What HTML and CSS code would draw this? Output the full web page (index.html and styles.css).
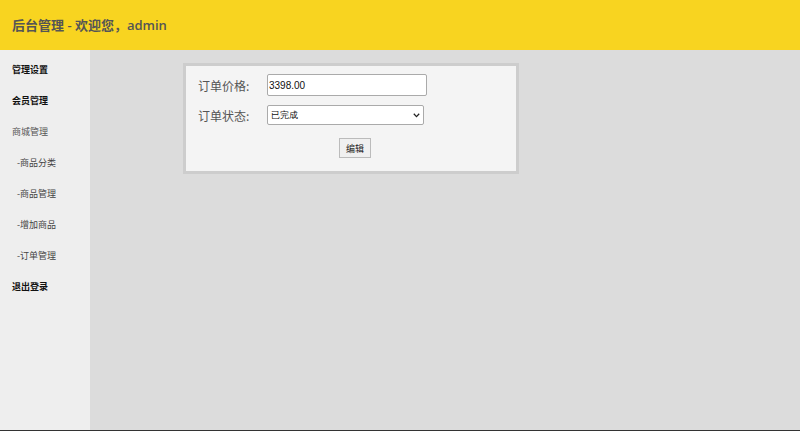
FILE: index.html
```html
<!DOCTYPE html>
<html lang="zh">
<head>
<meta charset="utf-8">
<link rel="stylesheet" href="styles.css">
</head>
<body>
<div class="page">
  <header class="top">后台管理 - 欢迎您，admin</header>
  <div class="body">
    <nav class="side">
      <a class="item bold">管理设置</a>
      <a class="item bold">会员管理</a>
      <a class="item grey">商城管理</a>
      <a class="item sub">-商品分类</a>
      <a class="item sub">-商品管理</a>
      <a class="item sub">-增加商品</a>
      <a class="item sub">-订单管理</a>
      <a class="item bold">退出登录</a>
    </nav>
    <main class="main">
      <form class="card">
        <div class="row">
          <label class="lbl">订单价格:</label>
          <input class="inp" type="text" value="3398.00">
        </div>
        <div class="row">
          <label class="lbl">订单状态:</label>
          <div class="selwrap">
            <select class="sel"><option>已完成</option></select>
            <svg class="chev" width="7" height="5" viewBox="0 0 7 5"><path d="M0.8 0.8 L3.5 3.6 L6.2 0.8" fill="none" stroke="#222" stroke-width="1.3"/></svg>
          </div>
        </div>
        <div class="actions">
          <button class="btn" type="button">编辑</button>
        </div>
      </form>
    </main>
  </div>
</div>
</body>
</html>
```
FILE: styles.css
```css
* { box-sizing: border-box; }
html, body { margin: 0; padding: 0; }
body { font-family: "Noto Sans CJK SC", "Open Sans", sans-serif; }
.page { width: 800px; height: 431px; display: flex; flex-direction: column; border-bottom: 1px solid #333; }
.top {
  height: 50px; background: #f8d420; color: #555;
  font-family: "Open Sans", "Noto Sans CJK SC", sans-serif;
  font-weight: 600; font-size: 13px; line-height: 50px; padding-left: 12px;
}
.body { flex: 1; display: flex; }
.side { width: 90px; background: #eeeeee; padding-top: 11px; display: flex; flex-direction: column; }
.item { display: block; height: 31px; line-height: 18px; font-size: 9px; padding-left: 12px; color: #222; }
.item.bold { font-weight: 700; color: #111; }
.item.grey { color: #555; }
.item.sub { padding-left: 17px; color: #444; }
.main { flex: 1; background: #dcdcdc; padding: 13px 0 0 93px; }
.card {
  width: 336px; height: 111px; background: #f4f4f4; border: 3px solid #cdcdcd;
  padding: 8px 0 0 12px; margin: 0;
}
.row { display: flex; align-items: center; margin-bottom: 9px; }
.lbl { width: 69px; font-size: 12px; color: #555; }
.inp {
  width: 160px; height: 22px; border: 1px solid #aaa; border-radius: 2px; font-size: 10px;
  padding: 0 1px; font-family: "Liberation Sans", sans-serif; color: #111; background: #fff;
}
.selwrap { position: relative; width: 157px; height: 20px; }
.sel {
  -webkit-appearance: none; appearance: none;
  width: 157px; height: 20px; border: 1px solid #aaa; border-radius: 2px; font-size: 9px;
  background: #fff; color: #111; padding: 0 3px; display: block;
}
.chev { position: absolute; right: 4px; top: 8px; pointer-events: none; }
.actions { display: flex; padding-left: 141px; padding-top: 4px; }
.btn {
  width: 32px; height: 20px; font-size: 9px; border: 1px solid #bbb; background: #f0f0f0;
  color: #222; padding: 0; font-family: "Noto Sans CJK SC", sans-serif;
}
```
